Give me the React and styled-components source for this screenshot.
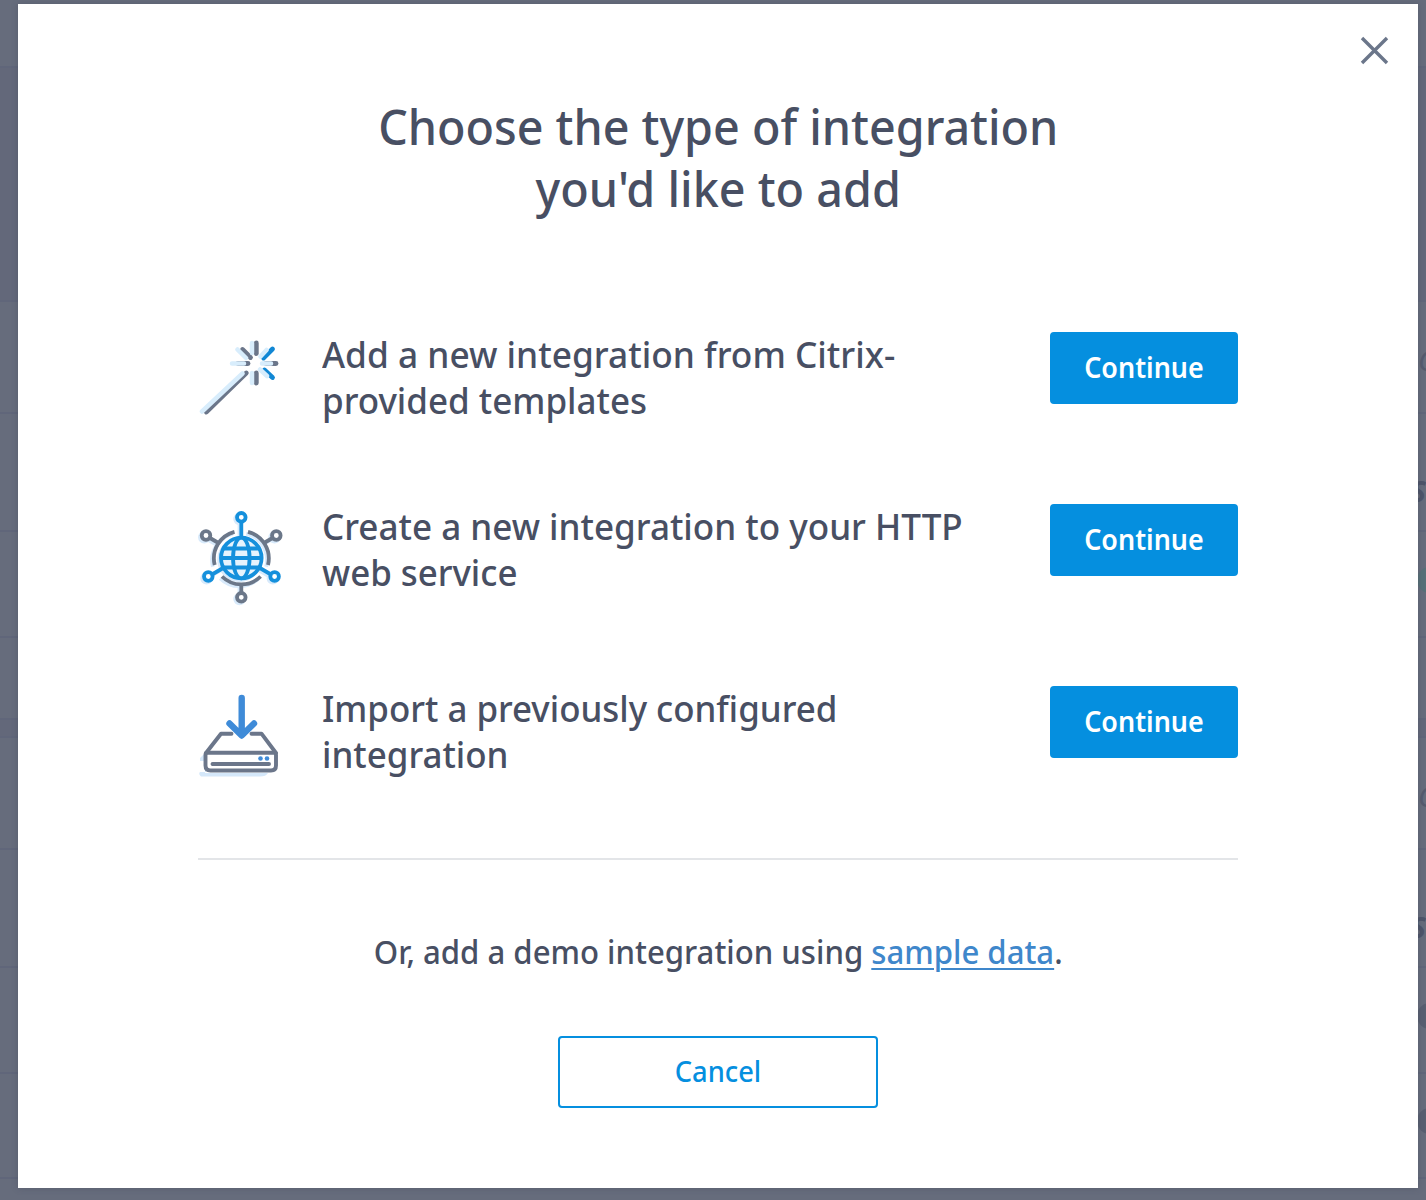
import React from 'react';
import styled, { createGlobalStyle } from 'styled-components';

const GlobalStyle = createGlobalStyle`
  * { box-sizing: border-box; }
  body {
    margin: 0;
    overflow: hidden;
    font-family: "Noto Sans", "Open Sans", sans-serif;
    color: #484f63;
  }
`;

const Page = styled.div`
  position: relative;
  width: 1426px;
  height: 1200px;
  overflow: hidden;
  background: #666c7c;
`;

const Backdrop = styled.div`
  display: flex;
  flex-direction: column;
`;

const BackdropRow = styled.div`
  flex: none;
  display: flex;
  align-items: flex-start;
  height: ${(p) => p.$height}px;
  padding-left: 1418px;
  padding-top: ${(p) => p.$inset || 0}px;
  overflow: hidden;
  background: ${(p) => (p.$shaded ? '#63687a' : 'transparent')};
  border-bottom: 2px solid #60667a;
`;

const Ghost = styled.span`
  flex: none;
  font-size: 28px;
  line-height: 40px;
  font-style: italic;
  font-weight: ${(p) => (p.$bold ? 700 : 400)};
  margin-left: ${(p) => (p.$bold ? -7 : 0)}px;
  color: ${(p) => (p.$bold ? '#4d5469' : '#555b6e')};
`;

const Dot = styled.span`
  flex: none;
  width: 26px;
  height: 26px;
  margin-left: -1px;
  border-radius: 50%;
  background: ${(p) => p.$color};
`;

const Modal = styled.section`
  position: absolute;
  top: 4px;
  left: 18px;
  width: 1400px;
  height: 1184px;
  padding: 91px 180px 0;
  display: flex;
  flex-direction: column;
  align-items: center;
  background: #fff;
  box-shadow: 0 0 6px rgba(60, 66, 84, 0.35);
`;

const CloseButton = styled.button`
  position: absolute;
  top: 32px;
  right: 29px;
  width: 29px;
  height: 29px;
  padding: 0;
  border: 0;
  background: none;
  svg { display: block; }
`;

/* Text set slightly condensed; $scale is the horizontal ratio. */
const Line = styled.span`
  display: block;
  white-space: nowrap;
  transform: scaleX(${(p) => p.$scale});
  transform-origin: ${(p) => (p.$start ? 'left' : 'center')};
`;

const Title = styled.h1`
  margin: 0;
  height: 237px;
  font-size: 49px;
  line-height: 62px;
  font-weight: 540;
  text-align: center;
`;

const Option = styled.div`
  display: grid;
  grid-template-columns: 124px 1fr 188px;
  align-items: start;
  width: 100%;
  height: ${(p) => p.$height}px;
`;

const OptionIcon = styled.svg`
  display: block;
  width: 100px;
  height: 105px;
  margin-left: -8px;
  margin-top: ${(p) => p.$top}px;
`;

const OptionText = styled.div`
  margin-top: -1px;
  font-size: 37px;
  line-height: 46px;
  font-weight: 500;
`;

const Button = styled.button`
  height: 72px;
  padding: 0 0 2px;
  font-family: inherit;
  font-size: 29px;
  line-height: 40px;
  font-weight: ${(p) => (p.$outline ? 500 : 600)};
  border-radius: 4px;
  width: ${(p) => (p.$outline ? 320 : 188)}px;
  border: 2px solid #058fdf;
  color: ${(p) => (p.$outline ? '#058fdf' : '#fff')};
  background: ${(p) => (p.$outline ? '#fff' : '#058fdf')};
`;

const Divider = styled.hr`
  width: 100%;
  height: 2px;
  margin: 0 0 69px;
  border: 0;
  background: #e3e5e8;
`;

const Demo = styled.p`
  margin: 0 0 61px;
  height: 46px;
  font-size: 33px;
  line-height: 46px;
  font-weight: 500;
`;

const Link = styled.a`
  color: #3f87cb;
  text-decoration: underline;
  text-decoration-thickness: 2px;
  text-underline-offset: 4px;
`;

const rays = [
  ['M66.300 13V23.500', '#6b768a'],
  ['M66.300 43V53', '#6b768a'],
  ['M52.500 19.500L60.500 27.500', '#6b768a'],
  ['M48 33.5H58', '#6b768a'],
  ['M76 33.5H86', '#6b768a'],
  ['M82.5 19L73.5 28', '#1187d4'],
  ['M74.5 40L82.5 47.5', '#1187d4'],
];

const WandIcon = () => (
  <OptionIcon viewBox="0 0 100 105" $top={-2} fill="none" strokeLinecap="round">
    {rays.map(([d, color]) => (
      <path key={d} d={d} stroke={color} strokeWidth="4.8" />
    ))}
    <path d="M56.300 43L16.300 82" stroke="#6b768a" strokeWidth="4.8" />
    <path
      d="M62 13V23M62 43V53M47.500 19.5L56 28M42 33.5H54M72 33.5H81M76.5 20L70.5 26.5M70 39.5L77 46M52.500 43.5L12 81.500"
      stroke="#d8edfc"
      strokeWidth="4.5"
    />
  </OptionIcon>
);

const GlobeShape = () => (
  <>
    <circle cx="51.3" cy="53" r="20.3" />
    <ellipse cx="51.3" cy="53" rx="8.3" ry="20.3" />
    <path d="M34 43.5H69M31 53H72M34 62.5H69M51.3 33V17" />
    <circle cx="51.3" cy="12.3" r="4.3" />
    <circle cx="18.3" cy="71.5" r="4.3" />
    <circle cx="84.6" cy="71.5" r="4.3" />
    <path d="M22 69.5L34 62.5M69 62.5L81 69.5" />
  </>
);

const OrbitShape = () => (
  <>
    <path d="M24.700 60A27.500 27.500 0 0 1 44.500 26.800M58 26.800A27.500 27.500 0 0 1 78 60M32 71.500A27.500 27.500 0 0 0 70.600 71.500" />
    <circle cx="16" cy="30.5" r="4.3" />
    <circle cx="86.3" cy="30.5" r="4.3" />
    <circle cx="51.3" cy="92.3" r="4.3" />
    <path d="M20 33L28.500 38M82.5 33L74 38M51.3 80V88" />
  </>
);

const GlobeIcon = () => (
  <OptionIcon viewBox="0 0 100 105" $top={1} fill="none" strokeWidth="3.8">
    <g stroke="#d8eafb" transform="translate(-1.8 1.8)">
      <circle cx="51.3" cy="53" r="20" fill="#e3f1fd" />
      <GlobeShape />
      <OrbitShape />
    </g>
    <g fill="#fff">
      <circle cx="51.3" cy="12.3" r="3" />
      <circle cx="18.3" cy="71.5" r="3" />
      <circle cx="84.6" cy="71.5" r="3" />
      <circle cx="16" cy="30.5" r="3" />
      <circle cx="86.3" cy="30.5" r="3" />
      <circle cx="51.3" cy="92.3" r="3" />
    </g>
    <circle cx="51.3" cy="53" r="20" fill="#e6f3fd" />
    <g stroke="#6b7789"><OrbitShape /></g>
    <g stroke="#1590dc"><GlobeShape /></g>
  </OptionIcon>
);

const DriveIcon = () => (
  <OptionIcon viewBox="0 0 100 105" $top={-1} fill="none" strokeLinecap="round" strokeLinejoin="round">
    <path d="M10 73L15 68V88H78Q76 91.500 70 91.500H11Q8 89 10 87H16V76H10Z" fill="#d5e8fa" />
    <path d="M17.500 67.800H84Q86 67.800 86 70V80.500Q86 85.500 81 85.500H20.500Q15.500 85.500 15.500 80.500V70Q15.500 67.800 17.500 67.800Z" fill="#fff" stroke="#6b768a" strokeWidth="3.9" />
    <path d="M16 68L31 48.700H41.500M61.500 48.700H71.500L86 68M22.500 79H79" stroke="#6b768a" strokeWidth="3.9" />
    <path d="M51.700 13V49M39.500 38.500L51.700 50.500L64 38.500" stroke="#3f8bd8" strokeWidth="6.400" />
    <circle cx="70.500" cy="73.500" r="2.300" fill="#3f8bd8" />
    <circle cx="77" cy="73.500" r="2.300" fill="#3f8bd8" />
  </OptionIcon>
);

const options = [
  {
    height: 172,
    Icon: WandIcon,
    lines: [['Add a new integration from Citrix-', 0.953], ['provided templates', 0.945]],
  },
  {
    height: 182,
    Icon: GlobeIcon,
    lines: [['Create a new integration to your HTTP', 0.947], ['web service', 0.942]],
  },
  {
    height: 172,
    Icon: DriveIcon,
    lines: [['Import a previously configured', 0.942], ['integration', 0.944]],
  },
];

export default function App() {
  return (
    <Page>
      <GlobalStyle />
      <Backdrop aria-hidden="true">
        <BackdropRow $height={68} />
        <BackdropRow $height={234} $shaded />
        <BackdropRow $height={112} $inset={38}><Ghost>C</Ghost></BackdropRow>
        <BackdropRow $height={118} $inset={57}><Ghost $bold>S</Ghost></BackdropRow>
        <BackdropRow $height={106} $inset={35}><Dot $color="#577078" /></BackdropRow>
        <BackdropRow $height={82} />
        <BackdropRow $height={18} $shaded />
        <BackdropRow $height={112} $inset={38}><Ghost>C</Ghost></BackdropRow>
        <BackdropRow $height={118} $inset={57}><Ghost $bold>S</Ghost></BackdropRow>
        <BackdropRow $height={106} $inset={35}><Dot $color="#585f71" /></BackdropRow>
        <BackdropRow $height={105} $inset={34}><Dot $color="#585f71" /></BackdropRow>
      </Backdrop>
      <Modal role="dialog">
        <CloseButton aria-label="Close">
          <svg width="29" height="29" viewBox="0 0 29 29" fill="none" stroke="#6b768a" strokeWidth="3.4">
            <path d="M2 2L27 27M27 2L2 27" />
          </svg>
        </CloseButton>
        <Title>
          <Line $scale={0.952}>Choose the type of integration</Line>
          <Line $scale={0.953}>you'd like to add</Line>
        </Title>
        {options.map(({ height, Icon, lines }) => (
          <Option key={lines[0][0]} $height={height}>
            <Icon />
            <OptionText>
              {lines.map(([text, scale]) => (
                <Line key={text} $start $scale={scale}>{text}</Line>
              ))}
            </OptionText>
            <Button><Line $scale={0.928}>Continue</Line></Button>
          </Option>
        ))}
        <Divider />
        <Demo>
          <Line $scale={0.943}>
            Or, add a demo integration using <Link>sample data</Link>.
          </Line>
        </Demo>
        <Button $outline><Line $scale={0.94}>Cancel</Line></Button>
      </Modal>
    </Page>
  );
}
